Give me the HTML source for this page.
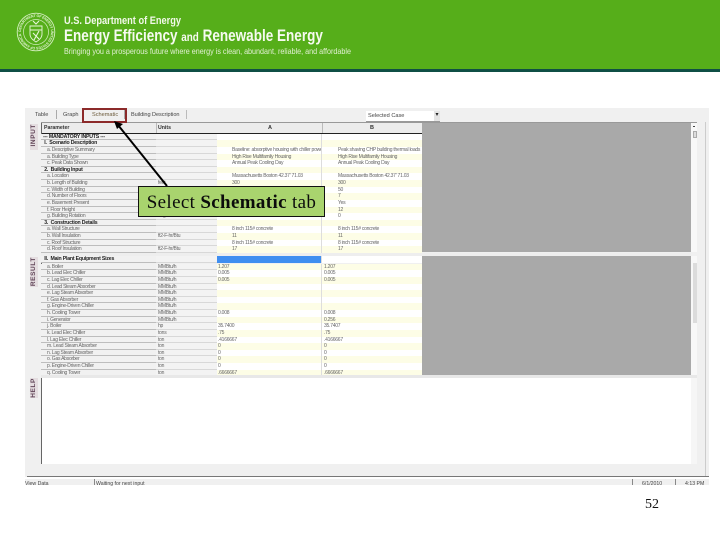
<!DOCTYPE html>
<html><head><meta charset="utf-8"><style>
html,body{margin:0;padding:0}
body{width:720px;height:540px;position:relative;overflow:hidden;background:#fff;font-family:"Liberation Sans",sans-serif}
.a{position:absolute;white-space:nowrap}
#hd{left:0;top:0;width:720px;height:69px;background:#56ae1a}
#hl{left:0;top:69px;width:720px;height:3px;background:#0f4f45}
#win{left:25px;top:108px;width:684px;height:377px;background:#f0f0f0}
.t{font-size:5.6px;color:#444;top:112px;filter:blur(.35px)}
.r{position:absolute;left:41px;width:381px;height:6.62px;font-size:5px;letter-spacing:-.25px;line-height:6.6px;color:#666;filter:blur(.3px)}
.r b{color:#222;font-size:5.2px;letter-spacing:-.2px}
.r span{position:absolute;top:0;height:6.62px;overflow:hidden;white-space:nowrap;box-sizing:border-box}
.p{left:0;width:115px;background:#f1f1f1;border-bottom:1px solid #bdbdbd;padding-left:6px}
.h{padding-left:2px}
.u{left:115px;width:61px;background:#f3f3f3;border-bottom:1px solid #d8d8d8;padding-left:2px}
.c1{left:176px;width:105px;padding-left:1px;border-right:1px solid #ddd}
.c2{left:281px;width:100px;padding-left:2px}
.r .i1{padding-left:15px}
.r .i2{padding-left:16px}
.w .c1,.w .c2{background:#fff}
.y .c1,.y .c2{background:#fdfde6}
.side{background:#e4dde0;color:#63475a;font-size:6.5px;font-weight:bold;letter-spacing:.6px;left:30px;width:8px;text-align:center}
.v{writing-mode:vertical-rl;transform:rotate(180deg);display:block;width:8px;line-height:8px}
</style></head><body>
<div class="a" id="hd"></div><div class="a" id="hl"></div>
<svg class="a" style="left:15.5px;top:11.5px" width="40" height="40" viewBox="0 0 40 40">
<defs><path id="ring" d="M20 20m-15 0a15 15 0 1 1 30 0a15 15 0 1 1-30 0"/></defs>
<circle cx="20" cy="20" r="18.8" fill="none" stroke="#d5eec0" stroke-width=".9"/>
<circle cx="20" cy="20" r="12.5" fill="none" stroke="#d5eec0" stroke-width=".7"/>
<text font-size="3.6" fill="#dff2cf" font-family="Liberation Sans" font-weight="bold" textLength="92"><textPath href="#ring">DEPARTMENT OF ENERGY UNITED STATES OF AMERICA</textPath></text>
<path d="M14 14h12v8c0 4-3 6-6 8c-3-2-6-4-6-8z" fill="none" stroke="#e8f6dc" stroke-width=".9"/>
<path d="M14 18h12M17 21l6 6M23 19l-5 9" stroke="#e8f6dc" stroke-width="1.1" fill="none"/>
<path d="M17 9l3 3l3-3" stroke="#e8f6dc" stroke-width="1.1" fill="none"/>
</svg>
<div class="a" style="left:64px;top:15px;font-size:11px;line-height:12px;font-weight:bold;color:#f2f8ea;transform:scaleX(.84);transform-origin:0 0;filter:blur(.35px)">U.S. Department of Energy</div>
<div class="a" style="left:64px;top:27px;font-size:16.5px;line-height:18px;font-weight:bold;color:#f6faf0;transform:scaleX(.82);transform-origin:0 0;filter:blur(.35px)">Energy Efficiency <span style="font-size:12px">and</span> Renewable Energy</div>
<div class="a" style="left:64px;top:46px;font-size:8.5px;line-height:10px;color:#e2f0d4;transform:scaleX(.845);transform-origin:0 0;filter:blur(.35px)">Bringing you a prosperous future where energy is clean, abundant, reliable, and affordable</div>

<div class="a" id="win"></div>
<div class="a t" style="left:35px">Table</div>
<div class="a" style="left:56px;top:110px;width:1px;height:9px;background:#aaa"></div>
<div class="a t" style="left:63px">Graph</div>
<div class="a t" style="left:92px;color:#6b5a3a">Schematic</div>
<div class="a" style="left:124px;top:110px;width:1px;height:9px;background:#aaa"></div>
<div class="a t" style="left:131px;letter-spacing:-.05px">Building Description</div>
<div class="a" style="left:186px;top:110px;width:1px;height:9px;background:#bbb"></div>
<div class="a" style="left:366px;top:111px;width:74px;height:11px;background:#fff;box-sizing:border-box;border-bottom:1px solid #999"></div>
<div class="a t" style="left:368px;top:113px">Selected Case</div>
<div class="a" style="left:434px;top:111px;width:6px;height:10px;background:#e4e4e4;font-size:6px;line-height:9px;text-align:center;color:#222">▾</div>

<div class="a side" style="top:124px;height:26px"><span class="v">INPUT</span></div>
<div class="a side" style="top:257px;height:30px"><span class="v">RESULT</span></div>
<div class="a side" style="top:378px;height:20px"><span class="v">HELP</span></div>

<!-- grid header -->
<div class="a" style="left:41px;top:123px;width:381px;height:10px;background:#ececec;border-bottom:1px solid #222"></div>
<div class="a" style="left:156px;top:123px;width:1px;height:10px;background:#bbb"></div>
<div class="a" style="left:322px;top:123px;width:1px;height:10px;background:#bbb"></div>
<div class="a" style="left:41px;top:122px;width:656px;height:1px;background:#999"></div>
<div class="a" style="left:41px;top:123px;width:1px;height:341px;background:#666"></div>
<div class="a" style="left:44px;top:125px;font-size:5.2px;font-weight:bold;color:#333;filter:blur(.3px)">Parameter</div>
<div class="a" style="left:158px;top:125px;font-size:5.2px;font-weight:bold;color:#333;filter:blur(.3px)">Units</div>
<div class="a" style="left:268px;top:125px;font-size:5.5px;font-weight:bold;color:#333">A</div>
<div class="a" style="left:370px;top:125px;font-size:5.5px;font-weight:bold;color:#333">B</div>

<!-- input rows -->
<div class="r w" style="top:133.7px"><span class="p h"><b>--- MANDATORY INPUTS ---</b></span><span class="u"></span><span class="c1"></span><span class="c2"></span></div>
<div class="r y" style="top:140.3px"><span class="p h"><b>&nbsp;I. &nbsp;Scenario Description</b></span><span class="u"></span><span class="c1"></span><span class="c2"></span></div>
<div class="r w" style="top:146.9px"><span class="p">a. Descriptive Summary</span><span class="u"></span><span class="c1 i1">Baseline: absorptive housing with chiller power</span><span class="c2 i2">Peak shaving CHP building thermal loads</span></div>
<div class="r y" style="top:153.6px"><span class="p">a. Building Type</span><span class="u"></span><span class="c1 i1">High Rise Multifamily Housing</span><span class="c2 i2">High Rise Multifamily Housing</span></div>
<div class="r w" style="top:160.2px"><span class="p">c. Peak Data Shown</span><span class="u"></span><span class="c1 i1">Annual Peak Cooling Day</span><span class="c2 i2">Annual Peak Cooling Day</span></div>
<div class="r y" style="top:166.8px"><span class="p h"><b>&nbsp;2. &nbsp;Building Input</b></span><span class="u"></span><span class="c1"></span><span class="c2"></span></div>
<div class="r w" style="top:173.4px"><span class="p">a. Location</span><span class="u"></span><span class="c1 i1">Massachusetts Boston 42.37' 71.03</span><span class="c2 i2">Massachusetts Boston 42.37' 71.03</span></div>
<div class="r y" style="top:180px"><span class="p">b. Length of Building</span><span class="u">feet</span><span class="c1 i1">300</span><span class="c2 i2">300</span></div>
<div class="r w" style="top:186.7px"><span class="p">c. Width of Building</span><span class="u"></span><span class="c1"></span><span class="c2 i2">50</span></div>
<div class="r y" style="top:193.3px"><span class="p">d. Number of Floors</span><span class="u"></span><span class="c1"></span><span class="c2 i2">7</span></div>
<div class="r w" style="top:199.9px"><span class="p">e. Basement Present</span><span class="u"></span><span class="c1"></span><span class="c2 i2">Yes</span></div>
<div class="r y" style="top:206.5px"><span class="p">f. Floor Height</span><span class="u"></span><span class="c1"></span><span class="c2 i2">12</span></div>
<div class="r w" style="top:213.1px"><span class="p">g. Building Rotation</span><span class="u">degrees</span><span class="c1"></span><span class="c2 i2">0</span></div>
<div class="r y" style="top:219.7px"><span class="p h"><b>&nbsp;3. &nbsp;Construction Details</b></span><span class="u"></span><span class="c1"></span><span class="c2"></span></div>
<div class="r w" style="top:226.4px"><span class="p">a. Wall Structure</span><span class="u"></span><span class="c1 i1">8 inch 115# concrete</span><span class="c2 i2">8 inch 115# concrete</span></div>
<div class="r y" style="top:233px"><span class="p">b. Wall Insulation</span><span class="u">ft2-F-hr/Btu</span><span class="c1 i1">11</span><span class="c2 i2">11</span></div>
<div class="r w" style="top:239.6px"><span class="p">c. Roof Structure</span><span class="u"></span><span class="c1 i1">8 inch 115# concrete</span><span class="c2 i2">8 inch 115# concrete</span></div>
<div class="r y" style="top:246.2px"><span class="p">d. Roof Insulation</span><span class="u">ft2-F-hr/Btu</span><span class="c1 i1">17</span><span class="c2 i2">17</span></div>

<!-- results -->
<div class="a" style="left:41px;top:252.8px;width:650px;height:3.2px;background:#eee"></div>
<div class="r w" style="top:256.4px"><span class="p h"><b>&nbsp;II. &nbsp;Main Plant Equipment Sizes</b></span><span class="u"></span><span class="c1" style="background:#3f8ef0"></span><span class="c2"></span></div>
<div class="r y" style="top:263.7px"><span class="p">a. Boiler</span><span class="u">MMBtu/h</span><span class="c1">1.207</span><span class="c2">1.207</span></div>
<div class="r w" style="top:270.3px"><span class="p">b. Lead Elec Chiller</span><span class="u">MMBtu/h</span><span class="c1">0.005</span><span class="c2">0.005</span></div>
<div class="r y" style="top:276.9px"><span class="p">c. Lag Elec Chiller</span><span class="u">MMBtu/h</span><span class="c1">0.005</span><span class="c2">0.005</span></div>
<div class="r w" style="top:283.5px"><span class="p">d. Lead Steam Absorber</span><span class="u">MMBtu/h</span><span class="c1"></span><span class="c2"></span></div>
<div class="r y" style="top:290.1px"><span class="p">e. Lag Steam Absorber</span><span class="u">MMBtu/h</span><span class="c1"></span><span class="c2"></span></div>
<div class="r w" style="top:296.7px"><span class="p">f. Gas Absorber</span><span class="u">MMBtu/h</span><span class="c1"></span><span class="c2"></span></div>
<div class="r y" style="top:303.4px"><span class="p">g. Engine-Driven Chiller</span><span class="u">MMBtu/h</span><span class="c1"></span><span class="c2"></span></div>
<div class="r w" style="top:310px"><span class="p">h. Cooling Tower</span><span class="u">MMBtu/h</span><span class="c1">0.008</span><span class="c2">0.008</span></div>
<div class="r y" style="top:316.6px"><span class="p">i. Generator</span><span class="u">MMBtu/h</span><span class="c1"></span><span class="c2">0.256</span></div>
<div class="r w" style="top:323.2px"><span class="p">j. Boiler</span><span class="u">hp</span><span class="c1">35.7400</span><span class="c2">35.7407</span></div>
<div class="r y" style="top:329.9px"><span class="p">k. Lead Elec Chiller</span><span class="u">tons</span><span class="c1">.75</span><span class="c2">.75</span></div>
<div class="r w" style="top:336.5px"><span class="p">l. Lag Elec Chiller</span><span class="u">ton</span><span class="c1">.4166667</span><span class="c2">.4166667</span></div>
<div class="r y" style="top:343.1px"><span class="p">m. Lead Steam Absorber</span><span class="u">ton</span><span class="c1">0</span><span class="c2">0</span></div>
<div class="r w" style="top:349.7px"><span class="p">n. Lag Steam Absorber</span><span class="u">ton</span><span class="c1">0</span><span class="c2">0</span></div>
<div class="r y" style="top:356.3px"><span class="p">o. Gas Absorber</span><span class="u">ton</span><span class="c1">0</span><span class="c2">0</span></div>
<div class="r w" style="top:362.9px"><span class="p">p. Engine-Driven Chiller</span><span class="u">ton</span><span class="c1">0</span><span class="c2">0</span></div>
<div class="r y" style="top:369.5px"><span class="p">q. Cooling Tower</span><span class="u">ton</span><span class="c1">.6666667</span><span class="c2">.6666667</span></div>

<!-- grey panels -->
<div class="a" style="left:422px;top:123px;width:269px;height:129px;background:#a9a9a9"></div>
<div class="a" style="left:422px;top:256px;width:269px;height:119px;background:#a9a9a9"></div>
<div class="a" style="left:691px;top:123px;width:6px;height:129px;background:#f8f8f8"></div>
<div class="a" style="left:693px;top:126px;width:2px;height:1px;background:#444"></div>
<div class="a" style="left:693px;top:131px;width:4px;height:7px;background:#ddd;border:1px solid #aaa;box-sizing:border-box"></div>
<div class="a" style="left:691px;top:256px;width:6px;height:119px;background:#f8f8f8"></div>
<div class="a" style="left:693px;top:263px;width:4px;height:60px;background:#dcdcdc"></div>
<div class="a" style="left:41px;top:375px;width:656px;height:3px;background:#e8e8e8"></div>
<!-- help -->
<div class="a" style="left:42px;top:378px;width:655px;height:86px;background:#fff"></div>
<div class="a" style="left:691px;top:378px;width:6px;height:86px;background:#f6f6f6"></div>
<div class="a" style="left:697px;top:122px;width:8px;height:354px;background:#f0f0f0;border-right:1px solid #ccc"></div>
<!-- status -->
<div class="a" style="left:27px;top:476px;width:682px;height:1px;background:#777"></div>
<div class="a" style="left:25px;top:477px;width:684px;height:2px;background:#fff"></div>
<div class="a" style="left:25px;top:481px;font-size:5.2px;line-height:6px;color:#444;filter:blur(.3px)">View Data</div>
<div class="a" style="left:96px;top:481px;font-size:5.2px;line-height:6px;color:#444;filter:blur(.3px)">Waiting for next input</div>
<div class="a" style="left:94px;top:479px;width:1px;height:6px;background:#888"></div>
<div class="a" style="left:632px;top:479px;width:1px;height:6px;background:#888"></div>
<div class="a" style="left:642px;top:481px;font-size:5.2px;line-height:6px;color:#444;filter:blur(.3px)">6/1/2010</div>
<div class="a" style="left:675px;top:479px;width:1px;height:6px;background:#888"></div>
<div class="a" style="left:685px;top:481px;font-size:5.2px;line-height:6px;color:#444;filter:blur(.3px)">4:13 PM</div>

<!-- highlight + arrow -->
<div class="a" style="left:82px;top:107.5px;width:45px;height:15.5px;box-sizing:border-box;border:2px solid #8c2a2a"></div>
<svg class="a" style="left:100px;top:115px" width="80" height="80" viewBox="0 0 80 80">
<line x1="67" y1="71" x2="18" y2="10" stroke="#000" stroke-width="2"/>
<path d="M14 6l9 3l-6 5z" fill="#000"/>
</svg>
<div class="a" style="left:138px;top:186px;width:187px;height:31px;box-sizing:border-box;background:#a9d46e;border:1px solid #111;font-family:'Liberation Serif',serif;font-size:19px;line-height:31px;color:#0c0c0c;text-align:center;letter-spacing:.35px">Select <b>Schematic</b> tab</div>
<div class="a" style="left:645px;top:497px;font-family:'Liberation Serif',serif;font-size:14px;line-height:16px;color:#111">52</div>
</body></html>
